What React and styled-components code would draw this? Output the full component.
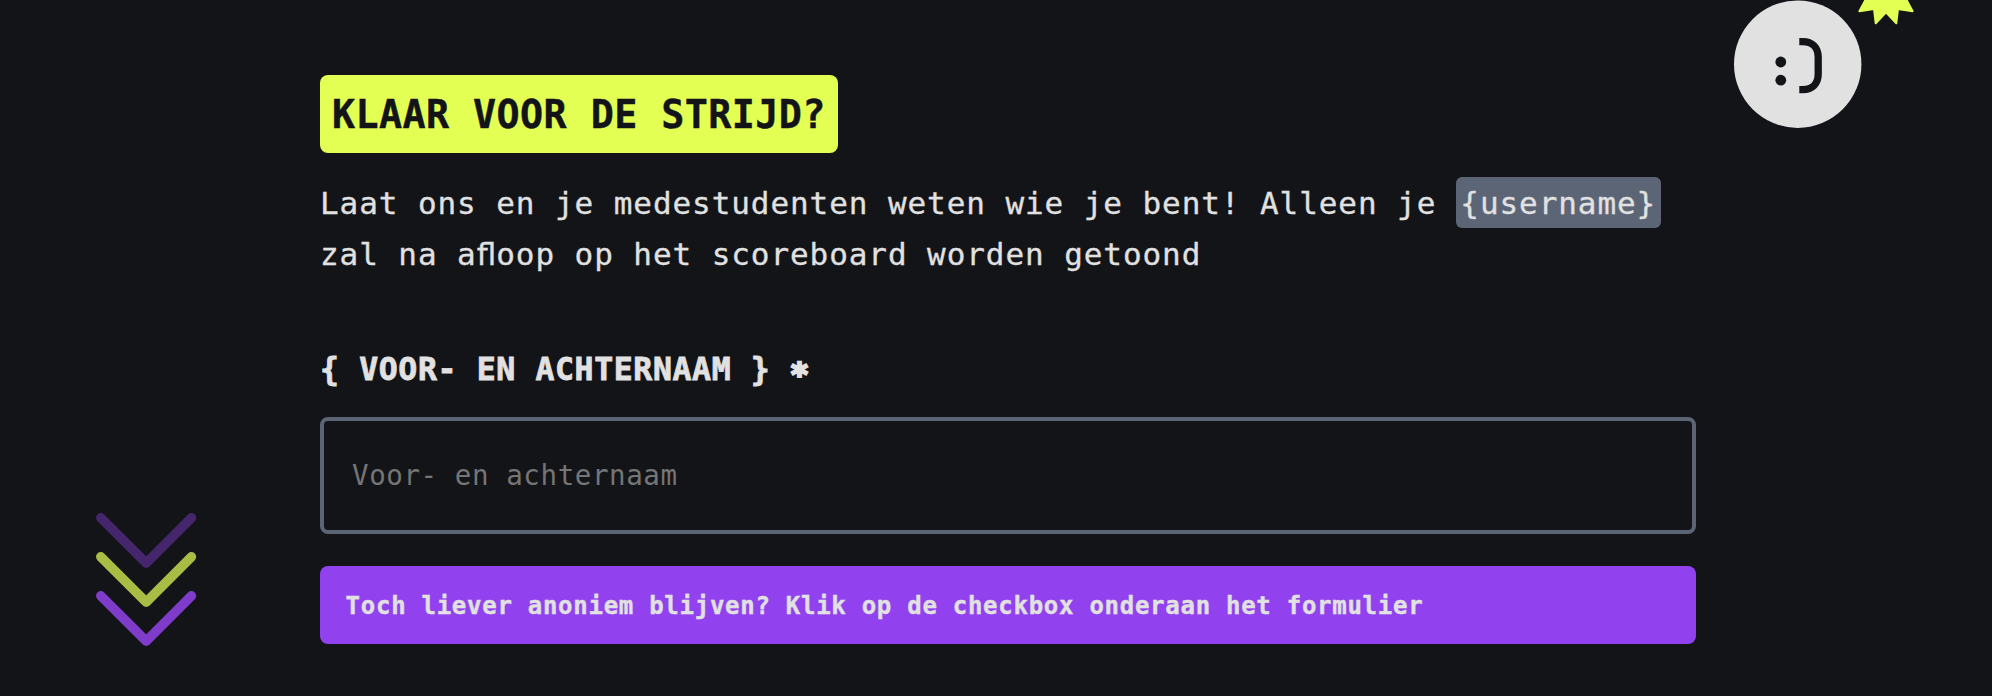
import React from "react";
import styled, { createGlobalStyle } from "styled-components";

const color = {
  ink: "#131418",
  paper: "#e1e1e1",
  lime: "#e4ff54",
  violet: "#9141ee",
  slate: "#5c6575",
  hint: "#757575",
};

const mono = '"DejaVu Sans Mono", "Liberation Mono", monospace';

const GlobalStyle = createGlobalStyle`
  *, *::before, *::after { box-sizing: border-box; }
  body {
    margin: 0;
    background: ${color.ink};
    color: ${color.paper};
    font-family: ${mono};
    overflow: hidden;
  }
`;

const Page = styled.div`
  display: grid;
  grid-template-columns: 320px 1375.5px 1fr;
  height: 696px;
  overflow: hidden;
`;

const ScrollHint = styled.aside`
  display: flex;
  align-items: flex-end;
  padding: 0 0 46px 94px;
`;

const Badge = styled.aside`
  display: flex;
  align-items: flex-start;
  padding-left: 34.5px;
`;

const Content = styled.main`
  display: flex;
  flex-direction: column;
  align-items: flex-start;
  padding-top: 75px;
`;

const Title = styled.h1`
  margin: 0;
  height: 78px;
  padding: 1px 12px 0;
  border-radius: 8px;
  background: ${color.lime};
  color: ${color.ink};
  font-size: 38.4px;
  line-height: 78px;
  letter-spacing: 0.4px;
  text-transform: uppercase;
  white-space: nowrap;
  -webkit-text-stroke: 0.4px currentColor;
`;

const Intro = styled.p`
  margin: 24px 0 0;
  font-size: 31px;
  line-height: 51.2px;
  letter-spacing: 0.92px;
  white-space: nowrap;
  padding-top: 1px;
  -webkit-text-stroke: 0.3px currentColor;
`;

const Variable = styled.span`
  display: inline-block;
  height: 51px;
  margin-top: -1px;
  padding: 1px 4.5px 0;
  border-radius: 6px;
  background: ${color.slate};
  line-height: 51px;
  vertical-align: top;
`;

const Ligature = styled.span`
  display: inline-block;
  width: 19.58px;
  font-family: "DejaVu Sans", sans-serif;
  letter-spacing: 0;
`;

const Field = styled.div`
  display: flex;
  flex-direction: column;
  width: 100%;
  margin-top: 63px;
`;

const Label = styled.label`
  height: 51px;
  margin-bottom: 23px;
  padding-top: 1px;
  font-size: 31.5px;
  font-weight: 700;
  line-height: 51px;
  letter-spacing: 0.62px;
  text-transform: uppercase;
  -webkit-text-stroke: 0.8px currentColor;
`;

const Required = styled.span`
  display: inline-block;
  line-height: 1;
  transform: translateY(5px);
  -webkit-text-stroke: 2.4px currentColor;
`;

const Input = styled.input`
  width: 100%;
  height: 117px;
  padding: 0 28px 2px;
  border: 4px solid ${color.slate};
  border-radius: 8px;
  outline: none;
  background: transparent;
  color: ${color.paper};
  font-family: ${mono};
  font-size: 27.5px;
  letter-spacing: 0.58px;

  &::placeholder {
    color: ${color.hint};
    opacity: 1;
  }
`;

const Notice = styled.div`
  width: 100%;
  height: 78px;
  margin-top: 32px;
  padding: 1px 25.6px 0;
  border-radius: 8px;
  background: ${color.violet};
  font-size: 24px;
  font-weight: 700;
  line-height: 78px;
  letter-spacing: 0.73px;
  white-space: nowrap;
  -webkit-text-stroke: 0.4px currentColor;
`;

const Chevrons = () => (
  <svg width="104" height="140" viewBox="94 510 104 140" fill="none" strokeWidth="9.6" strokeLinecap="round" strokeLinejoin="round">
    <path d="M100.8 517.8 146.2 563.2 191.4 517.8" stroke="#45256b" />
    <path d="M100.8 556.8 146.2 602.2 191.4 556.8" stroke="#a9bc43" />
    <path d="M100.8 595.8 146.2 641.2 191.4 595.8" stroke="#7f3bca" />
  </svg>
);

const Smiley = () => (
  <svg width="190" height="132" viewBox="1730 0 190 132">
    <circle cx="1797.7" cy="64.2" r="63.7" fill={color.paper} />
    <circle cx="1780.8" cy="62" r="5.4" fill={color.ink} />
    <circle cx="1780.8" cy="80.2" r="5.4" fill={color.ink} />
    <path d="M1799.3 41.6h3.4c9.6 0 15.5 6.2 15.5 15.6v16.9c0 9.4-5.9 15.6-15.5 15.6h-3.4" fill="none" stroke={color.ink} strokeWidth="7.3" />
    <path
      d="M1866.5 -2 1859.4 11.2 1874 8.9 1875.7 23.2 1886 12.4 1896.3 23.2 1898 8.9 1912.6 11.2 1905.5 -2Z"
      fill={color.lime}
      stroke={color.lime}
      strokeWidth="2"
      strokeLinejoin="round"
    />
  </svg>
);

export default function App() {
  return (
    <>
      <GlobalStyle />
      <Page>
        <ScrollHint>
          <Chevrons />
        </ScrollHint>
        <Content>
          <Title>Klaar voor de strijd?</Title>
          <Intro>
            Laat ons en je medestudenten weten wie je bent! Alleen je <Variable>{"{username}"}</Variable>
            <br />
            zal na a<Ligature>fl</Ligature>oop op het scoreboard worden getoond
          </Intro>
          <Field>
            <Label htmlFor="name">
              {"{ Voor- en achternaam } "}
              <Required>*</Required>
            </Label>
            <Input id="name" placeholder="Voor- en achternaam" />
          </Field>
          <Notice>Toch liever anoniem blijven? Klik op de checkbox onderaan het formulier</Notice>
        </Content>
        <Badge>
          <Smiley />
        </Badge>
      </Page>
    </>
  );
}
